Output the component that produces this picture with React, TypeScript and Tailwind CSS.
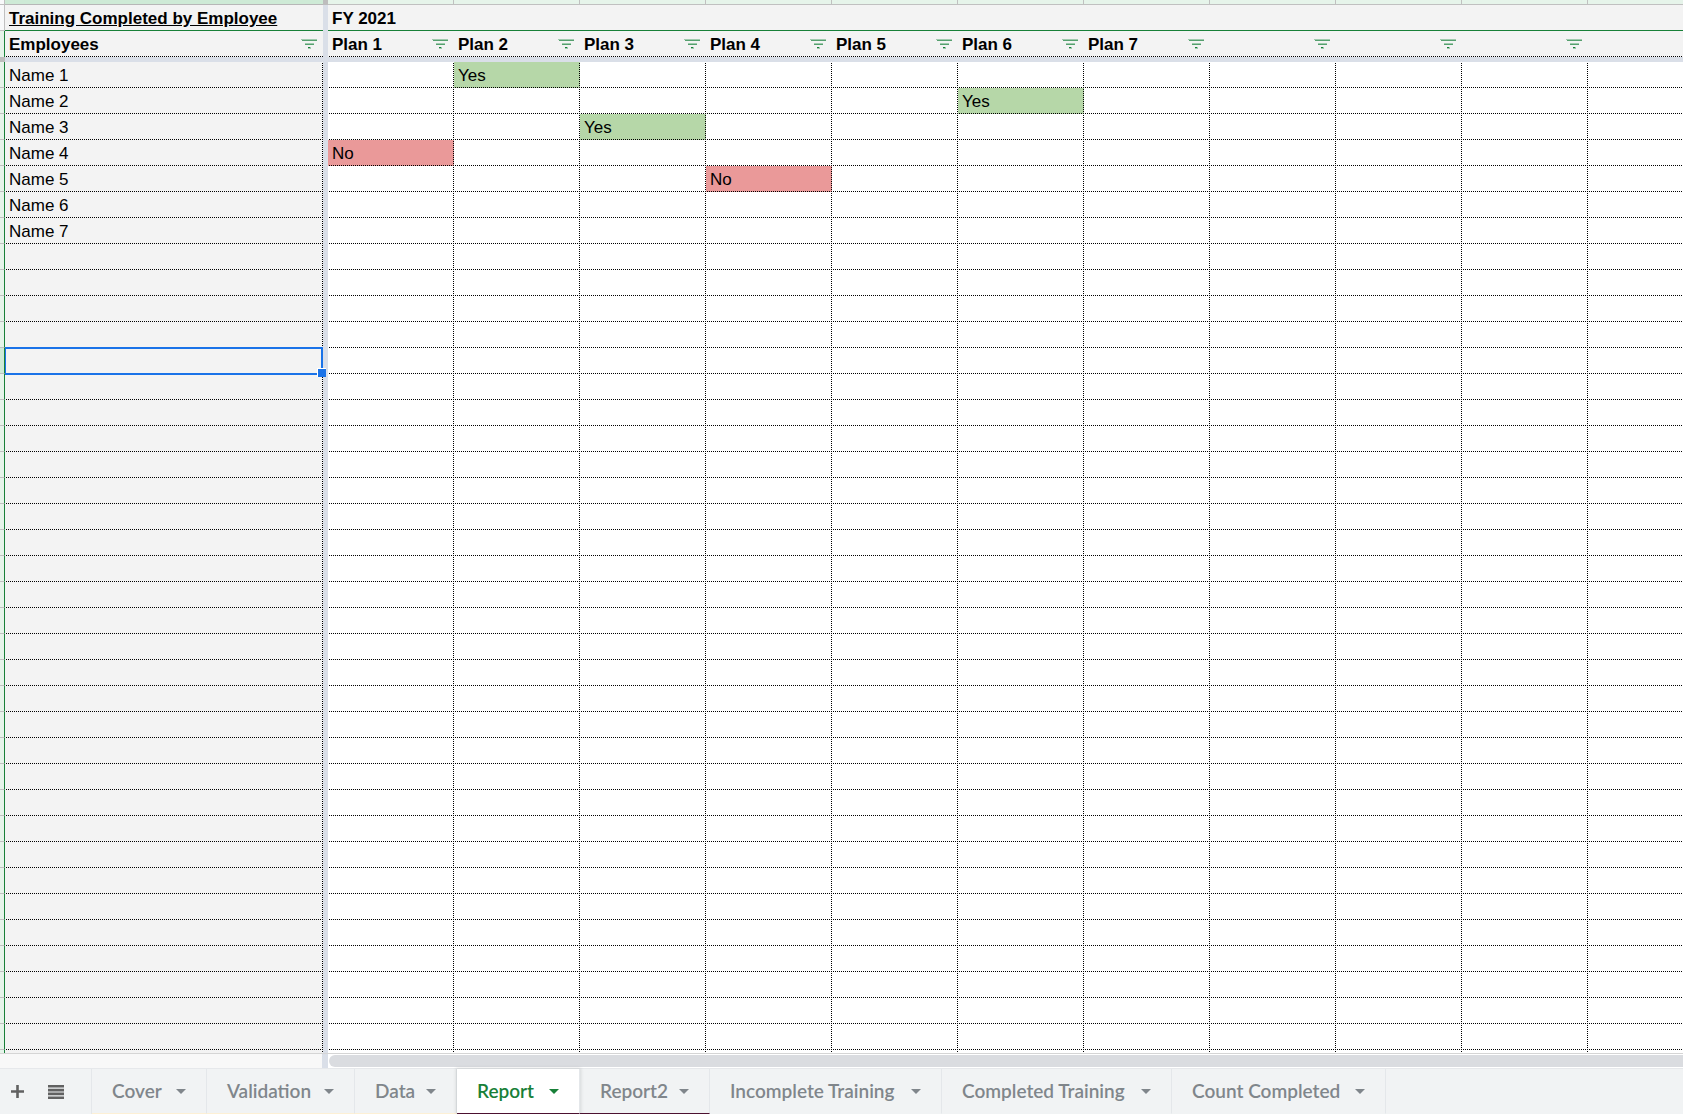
import React from 'react';

type Mark = 'Yes' | 'No';

interface Row {
  name: string;
  marks: Record<number, Mark>;
}

interface Tab {
  label: string;
  width: string;
  line: string;
  active?: boolean;
}

const PLANS = ['Plan 1', 'Plan 2', 'Plan 3', 'Plan 4', 'Plan 5', 'Plan 6', 'Plan 7', '', '', ''];
const COLUMNS = [0, 1, 2, 3, 4, 5, 6, 7, 8, 9, 10];
const ROW_COUNT = 38;
const SELECTED_ROW = 11;

const EMPLOYEES: Row[] = [
  { name: 'Name 1', marks: { 1: 'Yes' } },
  { name: 'Name 2', marks: { 5: 'Yes' } },
  { name: 'Name 3', marks: { 2: 'Yes' } },
  { name: 'Name 4', marks: { 0: 'No' } },
  { name: 'Name 5', marks: { 3: 'No' } },
  { name: 'Name 6', marks: {} },
  { name: 'Name 7', marks: {} },
];

const ROWS: Row[] = Array.from({ length: ROW_COUNT }, (_, i) => EMPLOYEES[i] ?? { name: '', marks: {} });

const TABS: Tab[] = [
  { label: 'Cover', width: 'w-[115px]', line: 'border-b-[#fdf0d5]' },
  { label: 'Validation', width: 'w-[148px]', line: 'border-b-[#fdf0d5]' },
  { label: 'Data', width: 'w-[102px]', line: 'border-b-[#fdf0d5]' },
  { label: 'Report', width: 'w-[123px]', line: 'border-b-[#4c1130]', active: true },
  { label: 'Report2', width: 'w-[130px]', line: 'border-b-[#4c1130]' },
  { label: 'Incomplete Training', width: 'w-[232px]', line: 'border-b-[#f1f3f4]' },
  { label: 'Completed Training', width: 'w-[230px]', line: 'border-b-[#f1f3f4]' },
  { label: 'Count Completed', width: 'w-[214px]', line: 'border-b-[#f1f3f4]' },
];

const MARK_COLORS: Record<Mark, string> = {
  Yes: 'bg-[#b6d7a8]',
  No: 'bg-[#ea9999]',
};

// Dotted grid lines, one pixel on and one pixel off, so they run on evenly from cell to cell
const DOTS_BOTTOM = 'bg-[linear-gradient(90deg,transparent_50%,#000_50%)] bg-[length:2px_1px] bg-bottom-left bg-repeat-x';
const DOTS_RIGHT = 'bg-[linear-gradient(transparent_50%,#000_50%)] bg-[length:1px_2px] bg-top-right bg-repeat-y';
const DOTS_BOTH =
  'bg-[linear-gradient(90deg,transparent_50%,#000_50%),linear-gradient(transparent_50%,#000_50%)] bg-[length:2px_1px,1px_2px] bg-[position:left_bottom,right_top] [background-repeat:repeat-x,repeat-y]';

const FilterButton: React.FC<{ label: string }> = ({ label }) => (
  <button type="button" aria-label={`Filter ${label}`} className="mb-px block shrink-0">
    <svg width="16" height="10" viewBox="0 0 16 10" shapeRendering="crispEdges" className="block">
      <path d="M0 0h16v1H0zM4 4h9v1H4zM7 8h3v2H7z" fill="#9fcaad" />
      <path d="M1 1h15v1H1zM4 5h9v1H4z" fill="#56a06f" />
      <path d="M7 8h2v1H7z" fill="#188038" />
    </svg>
  </button>
);

const HeaderCell: React.FC<{ label: string; filter?: boolean }> = ({ label, filter = true }) => (
  <th className={`bg-[#f3f3f3] pt-[2px] pr-[6px] pb-px pl-1 text-left font-bold ${DOTS_BOTTOM}`}>
    <div className="flex h-[23px] items-center justify-between">
      <span>{label}</span>
      {filter && <FilterButton label={label || 'column'} />}
    </div>
  </th>
);

const Sheet: React.FC = () => (
  <table className="w-full table-fixed border-separate border-spacing-0 text-[17px] leading-[23px] text-black">
    <colgroup>
      <col className="w-[5px]" />
      <col className="w-[318px]" />
      <col className="w-[5px]" />
      {PLANS.map((_, i) => (
        <col key={i} className="w-[126px]" />
      ))}
      <col />
    </colgroup>
    <thead>
      {/* Column letters, only their bottom edge is in view */}
      <tr className="h-[5px]">
        <td className="border-r border-b border-[#c0c0c0] bg-[#f8f9fa] p-0" />
        <td className="border-b border-[#b7b7b7] bg-[#ceead6] p-0" />
        <td className="bg-[#bdbdbd] p-0" />
        {COLUMNS.map((c) => (
          <td key={c} className="border-b border-[#c0c0c0] bg-[#e6f4ea] p-0 not-last:border-r" />
        ))}
      </tr>
      <tr className="h-[26px]">
        <td className="border-r border-b border-[#c0c0c0] bg-[#f8f9fa] p-0" />
        <th className="border-b border-[#188038] bg-[#f3f3f3] p-0 pt-[2px] pl-1 text-left font-bold underline">
          Training Completed by Employee
        </th>
        <td className="bg-[#dadfe8] p-0" />
        <th colSpan={11} className="border-b border-[#188038] bg-[#f3f3f3] p-0 pt-[2px] pl-1 text-left font-bold">
          FY 2021
        </th>
      </tr>
      <tr className="h-[26px]">
        <td className="border-r border-[#188038] bg-[#e6f4ea] p-0" />
        <HeaderCell label="Employees" />
        <td className="bg-[#dadfe8] p-0" />
        {PLANS.map((plan, i) => (
          <HeaderCell key={i} label={plan} />
        ))}
        <HeaderCell label="" filter={false} />
      </tr>
      <tr className="h-[5px]">
        <td className="bg-[#bdbdbd] p-0" />
        <td colSpan={13} className="bg-[#dadfe8] p-0" />
      </tr>
    </thead>
    <tbody>
      {ROWS.map((row, r) => (
        <tr key={r} className="h-[26px]">
          <td className={`border-r border-b border-r-[#188038] border-b-[#c0c0c0] p-0 ${r === SELECTED_ROW ? 'bg-[#ceead6]' : 'bg-[#e6f4ea]'}`} />
          <td className={`relative bg-[#f3f3f3] p-0 pt-[2px] pb-px pl-1 ${DOTS_BOTH}`}>
            {row.name}
            {r === SELECTED_ROW && (
              <div className="absolute inset-x-0 -inset-y-px z-10 border-2 border-l border-[#1a73e8]">
                <span className="absolute -right-[5px] -bottom-1 size-[9px] border-t border-l border-white bg-[#1a73e8]" />
              </div>
            )}
          </td>
          <td className="bg-[#dadfe8] p-0" />
          {COLUMNS.map((c) => {
            const mark = row.marks[c];
            return (
              <td
                key={c}
                className={`p-0 pt-[2px] pb-px pl-1 ${c < PLANS.length ? DOTS_BOTH : DOTS_BOTTOM} ${mark ? MARK_COLORS[mark] : 'bg-white'}`}
              >
                {mark}
              </td>
            );
          })}
        </tr>
      ))}
      <tr className="h-[3px]">
        <td className="border-r border-[#188038] bg-[#e6f4ea] p-0" />
        <td className={`bg-[#f3f3f3] p-0 ${DOTS_RIGHT}`} />
        <td className="bg-[#dadfe8] p-0" />
        {COLUMNS.map((c) => (
          <td key={c} className={`bg-white p-0 ${c < PLANS.length ? DOTS_RIGHT : ''}`} />
        ))}
      </tr>
    </tbody>
  </table>
);

const ScrollBar: React.FC = () => (
  <div className="flex h-[15px] border-t border-[#d5d5d5]">
    <div className="w-[322px] shrink-0 bg-[#f8f8f8]" />
    <div className="w-[6px] shrink-0 bg-[#dadfe8]" />
    <div className="flex-1 bg-white py-px pl-px">
      <div className="h-3 rounded-l-full bg-[#dadce0]" />
    </div>
  </div>
);

const SheetTabs: React.FC = () => (
  <nav className="flex h-[46px] border-t border-[#e6e8eb] bg-[#f1f3f4] font-['Lato',sans-serif] text-[19px] font-semibold text-[#80868b]">
    <div className="flex w-[92px] shrink-0 items-center border-r border-[#e4e7ea] pl-[11px] text-[#616161]">
      <button type="button" aria-label="Add sheet">
        <svg width="13" height="13" viewBox="0 0 13 13" className="block">
          <path d="M5.200 0h2.600v5.200H13v2.600H7.800V13H5.200V7.800H0V5.200h5.200z" fill="currentColor" />
        </svg>
      </button>
      <button type="button" aria-label="All sheets" className="ml-6">
        <svg width="16" height="14" viewBox="0 0 16 14" className="block">
          <path d="M0 0h16v2.600H0zM0 3.800h16v2.600H0zM0 7.600h16v2.600H0zM0 11.400h16V14H0z" fill="currentColor" />
        </svg>
      </button>
    </div>
    {TABS.map((tab) => (
      <button
        key={tab.label}
        type="button"
        className={`flex shrink-0 items-center justify-between border-r border-b border-r-[#e4e7ea] px-5 pt-px ${tab.width} ${tab.line} ${
          tab.active ? 'z-10 bg-white text-[#188038] shadow-[0_0_3px_1px_rgba(60,64,67,0.15)]' : ''
        }`}
      >
        <span>{tab.label}</span>
        <svg width="10" height="5" viewBox="0 0 10 5" className="block">
          <path d="M0 0h10L5 5z" fill="currentColor" />
        </svg>
      </button>
    ))}
  </nav>
);

const App: React.FC = () => {
  return (
    <main className="flex min-h-screen flex-col overflow-hidden bg-white font-['Liberation_Sans',Arial,sans-serif]">
      <Sheet />
      <ScrollBar />
      <SheetTabs />
    </main>
  );
};

export default App;
